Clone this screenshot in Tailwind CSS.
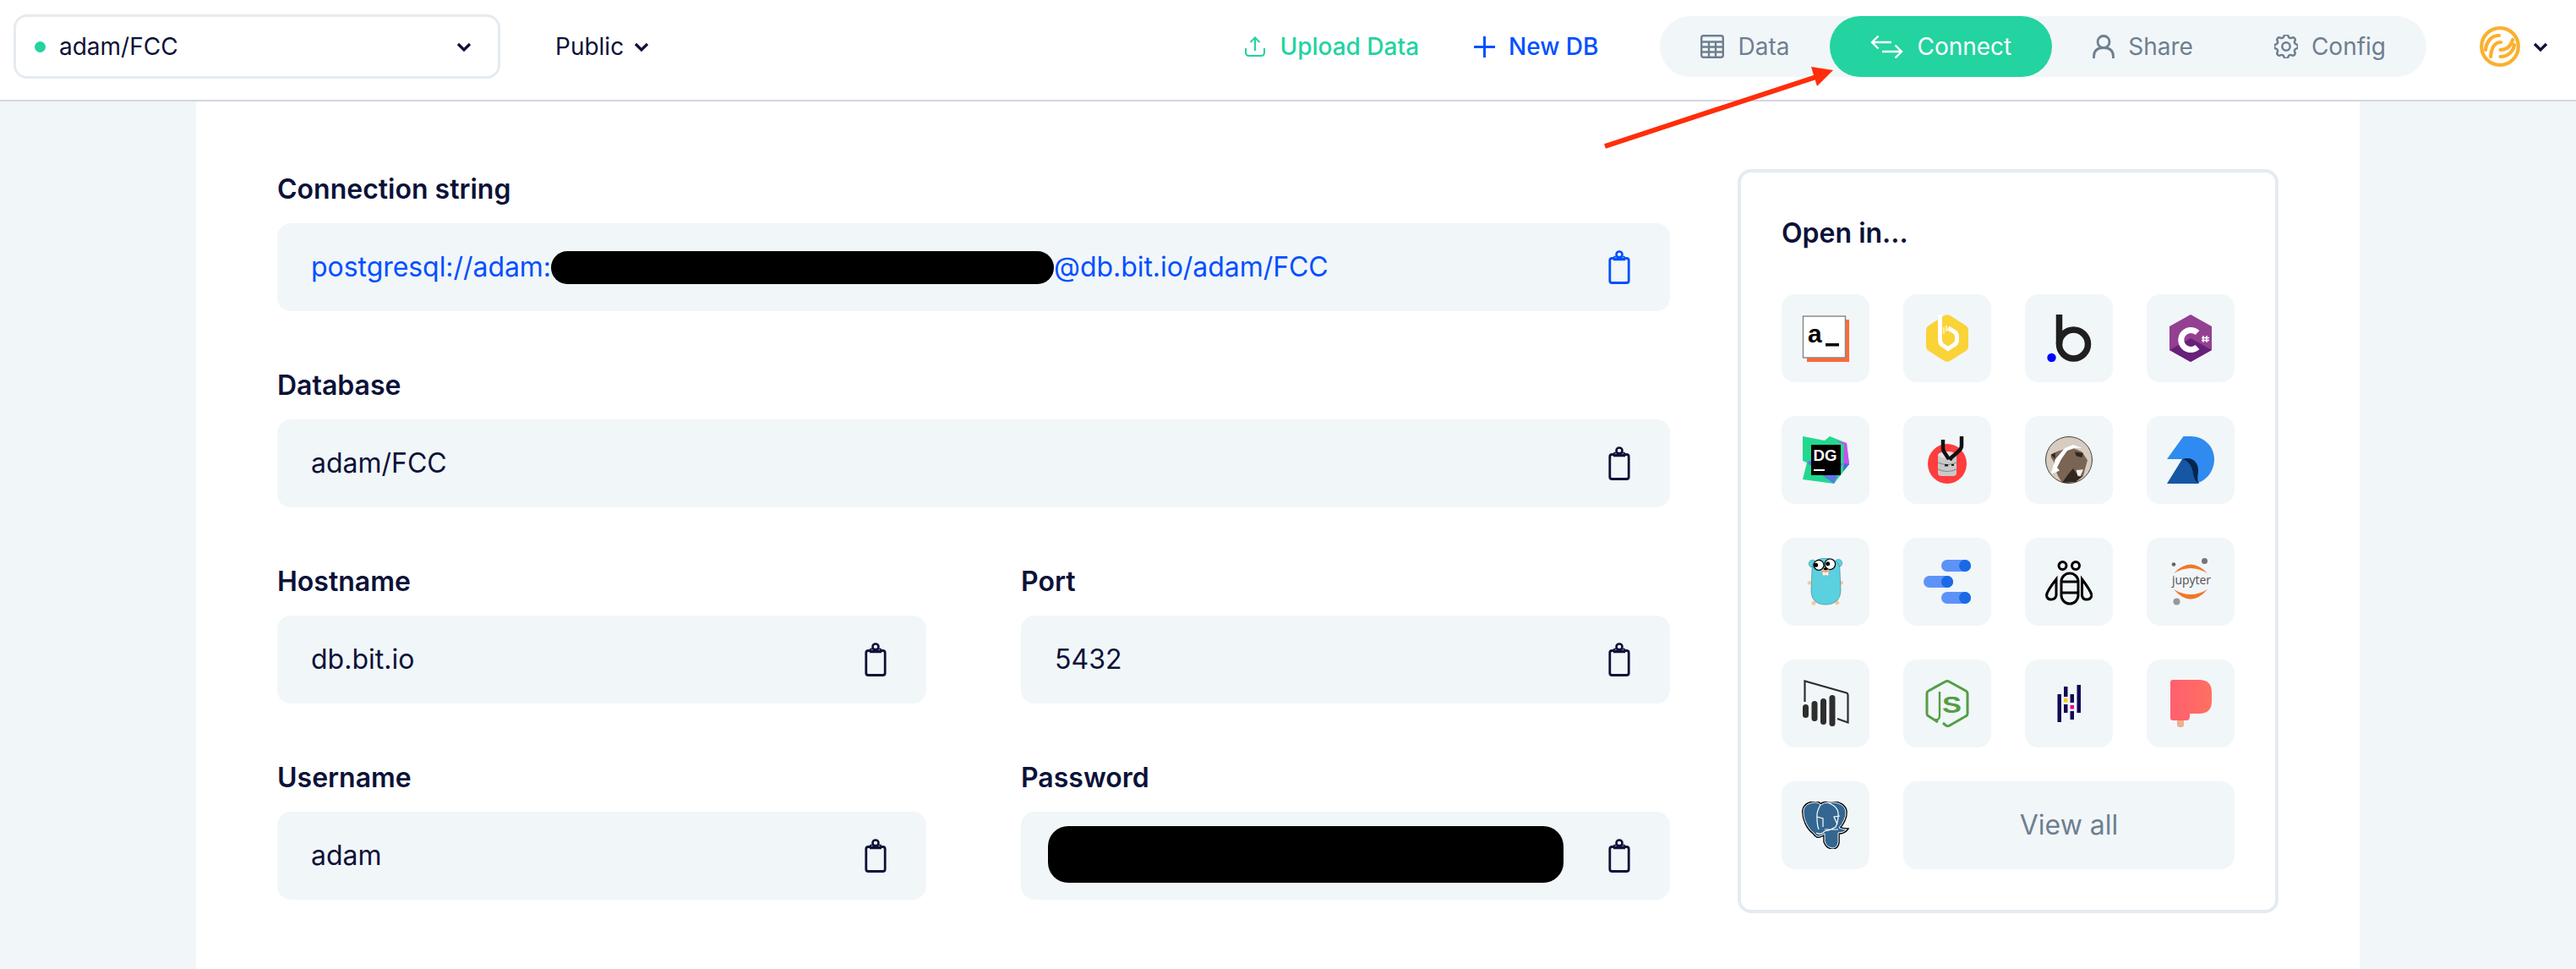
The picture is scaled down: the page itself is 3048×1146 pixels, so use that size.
<!DOCTYPE html>
<html lang="en">
<head>
  <meta charset="UTF-8">
  <title>adam/FCC - Connect</title>
  <script src="https://cdn.jsdelivr.net/npm/@tailwindcss/browser@4"></script>
</head>
<body class="bg-[#f1f6f9] text-[#0c1238] font-[family-name:Inter,sans-serif] text-[32px] w-[3048px] h-[1146px] overflow-hidden relative">
  <!-- shared icons -->
  <svg class="hidden">
    <symbol id="clip" viewBox="0 0 26 40">
      <path d="M7 9.500H4.500Q1.800 9.500 1.800 12V36Q1.800 38.500 4.500 38.500H21.500Q24.200 38.500 24.200 36V12Q24.200 9.500 21.500 9.500H19" fill="none" stroke="currentColor" stroke-width="2.800"/>
      <path d="M6 10.500H20" stroke="currentColor" stroke-width="3.500"/>
      <circle cx="13" cy="5" r="3.500" fill="none" stroke="currentColor" stroke-width="2.600"/>
      <path d="M7 9V7.500H19V9" fill="none" stroke="currentColor" stroke-width="1.500"/>
    </symbol>
    <symbol id="chev" viewBox="0 0 18 11">
      <path d="M2 2L9 9L16 2" fill="none" stroke="currentColor" stroke-width="3.200"/>
    </symbol>
  </svg>

  <!-- Header -->
  <header class="h-[120px] bg-white border-b-2 border-[#d5d5e3] flex items-center pb-2 pl-4 pr-[33px] text-[28px]">
    <div class="w-[576px] h-[76px] border-[3px] border-[#e5ebf0] rounded-2xl flex items-center pl-[22px] pr-[31px]">
      <span class="w-[13px] h-[13px] rounded-full bg-[#23d3a0]"></span>
      <span class="ml-4">adam/FCC</span>
      <svg class="w-[18px] h-[11px] ml-auto"><use href="#chev"/></svg>
    </div>
    <div class="flex items-center ml-[65px] gap-3">
      <span>Public</span>
      <svg class="w-[18px] h-[11px]"><use href="#chev"/></svg>
    </div>

    <div class="flex items-center gap-[17px] ml-auto text-[#23d3a0] font-medium">
      <svg class="w-6 h-6" viewBox="0 0 24 24" fill="none" stroke="currentColor" stroke-width="2"><path d="M1 14V19Q1 23 5 23H19Q23 23 23 19V14M12 17V2M6.500 7L12 1.500L17.500 7"/></svg>
      <span>Upload Data</span>
    </div>
    <div class="flex items-center gap-4 ml-[65px] text-[#0050ff] font-medium">
      <svg class="w-[25px] h-[25px]" viewBox="0 0 25 25" fill="none" stroke="currentColor" stroke-width="3"><path d="M12.500 0V25M0 12.500H25"/></svg>
      <span>New DB</span>
    </div>

    <nav class="flex items-center h-[72px] rounded-full bg-[#f1f6f9] text-[#6e7f8f] ml-[73px]">
      <a class="flex items-center gap-4 px-12 h-full">
        <svg class="w-7 h-7" viewBox="0 0 28 28" fill="none" stroke="currentColor" stroke-width="2.400"><rect x="1.200" y="1.200" width="25.600" height="25.600" rx="2.500"/><path d="M1 8.500H27M1 14.500H27M1 20.500H27M10 8.500V27M18 8.500V27"/></svg>
        <span>Data</span>
      </a>
      <a class="flex items-center gap-4 px-12 h-full rounded-full bg-[#23d3a0] text-white">
        <svg class="w-[39px] h-7" viewBox="0 0 39 28" fill="none" stroke="currentColor" stroke-width="2.400"><path d="M2 9H25M9.500 1.500L2 9L9.500 16.500M37 20H14M29.500 12.500L37 20L29.500 27.500"/></svg>
        <span>Connect</span>
      </a>
      <a class="flex items-center gap-4 px-12 h-full">
        <svg class="w-[26px] h-7" viewBox="0 0 26 28" fill="none" stroke="currentColor" stroke-width="2.800"><circle cx="13" cy="8.500" r="7"/><path d="M1.500 28V26Q1.500 15.500 13 15.500Q24.500 15.500 24.500 26V28"/></svg>
        <span>Share</span>
      </a>
      <a class="flex items-center gap-4 px-12 h-full">
        <svg class="w-7 h-7" viewBox="3 3 18 18" fill="none" stroke="currentColor" stroke-width="1.600"><path d="M10.325 4.317c.426-1.756 2.924-1.756 3.350 0a1.724 1.724 0 002.573 1.066c1.543-.94 3.310.826 2.370 2.370a1.724 1.724 0 001.065 2.572c1.756.426 1.756 2.924 0 3.350a1.724 1.724 0 00-1.066 2.573c.94 1.543-.826 3.310-2.370 2.370a1.724 1.724 0 00-2.572 1.065c-.426 1.756-2.924 1.756-3.350 0a1.724 1.724 0 00-2.573-1.066c-1.543.94-3.310-.826-2.370-2.370a1.724 1.724 0 00-1.065-2.572c-1.756-.426-1.756-2.924 0-3.350a1.724 1.724 0 001.066-2.573c-.94-1.543.826-3.310 2.370-2.370.996.608 2.296.07 2.572-1.065z"/><path d="M15 12a3 3 0 11-6 0 3 3 0 016 0z"/></svg>
        <span>Config</span>
      </a>
    </nav>

    <div class="flex items-center gap-[15px] ml-[63px]">
      <svg class="w-12 h-12" viewBox="0 0 48 48" fill="none" stroke="#fbb02d" stroke-width="4.200" stroke-linecap="round"><circle cx="24" cy="24" r="21.800"/><path d="M23 11C14 11 8 18 7 28M25 19C18 19 14 25 13 36M24.500 28C32 28 37 23 39 16M24.500 36C33 36 40 30 41 22"/></svg>
      <svg class="w-[18px] h-[11px]"><use href="#chev"/></svg>
    </div>
  </header>

  <!-- Main panel -->
  <main class="w-[2560px] h-[1026px] ml-[232px] bg-white px-24 pt-20 flex gap-20">
    <section class="w-[1648px] grid grid-cols-2 gap-x-[112px] gap-y-16 content-start">
      <div class="col-span-2">
        <h3 class="font-semibold leading-[48px] mb-4">Connection string</h3>
        <div class="h-[104px] rounded-2xl bg-[#f1f6f9] flex items-center pl-10 pr-[47px] text-[#0050ff] tracking-[-0.05px]">
          <span>postgresql://adam:</span>
          <span class="w-[595px] h-[39px] rounded-full bg-black"></span>
          <span>@db.bit.io/adam/FCC</span>
          <svg class="w-[26px] h-10 ml-auto"><use href="#clip"/></svg>
        </div>
      </div>
      <div class="col-span-2">
        <h3 class="font-semibold leading-[48px] mb-4">Database</h3>
        <div class="h-[104px] rounded-2xl bg-[#f1f6f9] flex items-center pl-10 pr-[47px]">
          <span>adam/FCC</span>
          <svg class="w-[26px] h-10 ml-auto"><use href="#clip"/></svg>
        </div>
      </div>
      <div>
        <h3 class="font-semibold leading-[48px] mb-4">Hostname</h3>
        <div class="h-[104px] rounded-2xl bg-[#f1f6f9] flex items-center pl-10 pr-[47px]">
          <span>db.bit.io</span>
          <svg class="w-[26px] h-10 ml-auto"><use href="#clip"/></svg>
        </div>
      </div>
      <div>
        <h3 class="font-semibold leading-[48px] mb-4">Port</h3>
        <div class="h-[104px] rounded-2xl bg-[#f1f6f9] flex items-center pl-10 pr-[47px]">
          <span>5432</span>
          <svg class="w-[26px] h-10 ml-auto"><use href="#clip"/></svg>
        </div>
      </div>
      <div>
        <h3 class="font-semibold leading-[48px] mb-4">Username</h3>
        <div class="h-[104px] rounded-2xl bg-[#f1f6f9] flex items-center pl-10 pr-[47px]">
          <span>adam</span>
          <svg class="w-[26px] h-10 ml-auto"><use href="#clip"/></svg>
        </div>
      </div>
      <div>
        <h3 class="font-semibold leading-[48px] mb-4">Password</h3>
        <div class="h-[104px] rounded-2xl bg-[#f1f6f9] flex items-center pl-8 pr-[47px]">
          <span class="w-[610px] h-[67px] mb-[3px] rounded-3xl bg-black"></span>
          <svg class="w-[26px] h-10 ml-auto"><use href="#clip"/></svg>
        </div>
      </div>
    </section>

    <!-- Open in card -->
    <aside class="w-[640px] h-[880px] border-4 border-[#e5ebf0] rounded-2xl p-12">
      <h3 class="font-semibold leading-[48px] mb-12">Open in...</h3>
      <div class="grid grid-cols-4 gap-10">
        <!-- a_ -->
        <div class="h-[104px] rounded-2xl bg-[#f1f6f9] flex items-center justify-center">
          <svg class="w-14 h-14" viewBox="0 0 56 56">
            <rect x="6" y="6" width="50" height="50" fill="#ff6a33"/>
            <rect x="1.500" y="2" width="50" height="49" fill="#fff" stroke="#8a8a8a" stroke-width="1.500"/>
            <text x="7" y="33" font-family="Liberation Sans" font-weight="700" font-size="30" fill="#000">a</text>
            <rect x="28" y="34" width="16" height="3.500" fill="#000"/>
          </svg>
        </div>
        <!-- beekeeper -->
        <div class="h-[104px] rounded-2xl bg-[#f1f6f9] flex items-center justify-center">
          <svg class="w-14 h-14" viewBox="0 0 56 56">
            <path d="M28 0L32 1.500L50 13Q53 15 53 18V38Q53 41 50 43L32 54.500Q28 57 24 54.500L6 43Q3 41 3 38V18Q3 15 6 13L24 1.500Z" fill="#fad337"/>
            <path d="M19.500 0V30Q19.500 34 22 36L29 40.500L36 36Q39.500 34 39.500 30V26Q39.500 22 36 20L29 16" fill="none" stroke="#fff" stroke-width="5"/>
            <path d="M24 15V23M27 13V20" stroke="#fff" stroke-width="1.200"/>
          </svg>
        </div>
        <!-- bubble -->
        <div class="h-[104px] rounded-2xl bg-[#f1f6f9] flex items-center justify-center">
          <svg class="w-14 h-14" viewBox="0 0 56 56">
            <path d="M16.500 0V35" stroke="#1f1f1f" stroke-width="7.500"/>
            <circle cx="33.500" cy="35" r="17" fill="none" stroke="#1f1f1f" stroke-width="7.500"/>
            <circle cx="7.500" cy="51" r="5.200" fill="#0000ff"/>
          </svg>
        </div>
        <!-- c# -->
        <div class="h-[104px] rounded-2xl bg-[#f1f6f9] flex items-center justify-center">
          <svg class="w-14 h-14" viewBox="0 0 56 56">
            <path d="M28 0L53 14V42L28 56L3 42V14Z" fill="#934090"/>
            <path d="M28 28L53 42L28 56L3 42Z" fill="#68217a"/>
            <path d="M36 21.500A11.500 11.500 0 1 0 36 38.500" fill="none" stroke="#fff" stroke-width="7"/>
            <path d="M43 25V33M47 25V33M41 27.500H50M41 30.500H50" stroke="#fff" stroke-width="1.400"/>
          </svg>
        </div>
        <!-- datagrip -->
        <div class="h-[104px] rounded-2xl bg-[#f1f6f9] flex items-center justify-center">
          <svg class="w-14 h-14" viewBox="0 0 56 56">
            <path d="M1 0L27 5L33 0L53 8L56 33L38 56L1 51L6 31L1 29Z" fill="#22d88f"/>
            <path d="M6 31L12 28L48 32L38 56L24 46Z" fill="#5a78e8"/>
            <path d="M40 5L53 8L56 33L49 41L50 10Z" fill="#c94ff0"/>
            <path d="M50 32L56 33L49 41Z" fill="#3b6fd8"/>
            <rect x="11" y="10" width="35" height="36" fill="#000"/>
            <text x="13.500" y="29" font-family="Liberation Sans" font-weight="700" font-size="18" fill="#fff" textLength="28" lengthAdjust="spacingAndGlyphs">DG</text>
            <rect x="14" y="39" width="13" height="2" fill="#fff"/>
          </svg>
        </div>
        <!-- usql -->
        <div class="h-[104px] rounded-2xl bg-[#f1f6f9] flex items-center justify-center">
          <svg class="w-14 h-14" viewBox="0 0 56 56">
            <ellipse cx="28" cy="32.500" rx="23" ry="23.500" fill="#ff3d3d"/>
            <rect x="17" y="21" width="22" height="26" rx="4" fill="#c9c9c9"/>
            <path d="M17 31Q28 36 39 31M17 39Q28 44 39 39" fill="none" stroke="#8d8d8d" stroke-width="1.200"/>
            <ellipse cx="28" cy="22" rx="11" ry="4" fill="#e2e2e2"/>
            <path d="M23 4V14Q23 17 26 21L30 27M45 0V11Q45 15 40 19L33 25L31 28" fill="none" stroke="#111" stroke-width="4.500"/>
            <rect x="25" y="33" width="4" height="2.500" fill="#222"/>
            <rect x="33" y="33" width="3" height="2" fill="#222"/>
          </svg>
        </div>
        <!-- dbeaver -->
        <div class="h-[104px] rounded-2xl bg-[#f1f6f9] flex items-center justify-center">
          <svg class="w-14 h-14" viewBox="0 0 56 56">
            <circle cx="28" cy="28" r="27.500" fill="#d6ccc2" stroke="#4a4038" stroke-width="1"/>
            <path d="M6.700 21.700L13.300 18.300L23.300 15L33.300 14L43.300 18.300L50 28.300L46.700 40L45 46.700L33.300 54L20 55L15 46.700L11.700 38.300L10 30L6.700 25Z" fill="#7a6453"/>
            <path d="M20 55L27 45L33 38L40 48L45 47L36 54Z" fill="#33261f"/>
            <path d="M7 43L12 27L23 14L33 10L44 14L36 13.500L26 17L19 27L14 37L17 40.500L9 44Z" fill="#fff"/>
            <path d="M36.700 40L45 39.300L41.700 46.700L38.300 46.700Z" fill="#f4f1ec"/>
            <path d="M35 18.300L45 20L43.300 25L36.700 23.300Z" fill="#33261f"/>
            <path d="M6.700 21.700L11.700 19.300L11.700 26.700Z" fill="#33261f"/>
          </svg>
        </div>
        <!-- blue D -->
        <div class="h-[104px] rounded-2xl bg-[#f1f6f9] flex items-center justify-center">
          <svg class="w-14 h-14" viewBox="0 0 56 56">
            <path d="M19.500 0H28C44 0 56 12 56 27C56 43 44 56 30 56H24L18 27H0Z" fill="#2f8bef"/>
            <path d="M18 27C26 29 30 36 31 45C32 50 34 54 38 56H0Z" fill="#1557a3"/>
            <path d="M18 27C30 23 38 31 37 42C36 49 36 53 38 56C34 54 32 50 31 45C30 36 26 29 18 27Z" fill="#06264f"/>
          </svg>
        </div>
        <!-- gopher -->
        <div class="h-[104px] rounded-2xl bg-[#f1f6f9] flex items-center justify-center">
          <svg class="w-14 h-14" viewBox="0 0 56 56">
            <circle cx="12.700" cy="6.700" r="4.500" fill="#5bd0df" stroke="#3e7f89" stroke-width=".5"/>
            <circle cx="43.300" cy="6" r="4.500" fill="#5bd0df" stroke="#3e7f89" stroke-width=".5"/>
            <circle cx="9" cy="29.300" r="2.200" fill="#f6c99a"/>
            <circle cx="46.700" cy="29.300" r="2.200" fill="#f6c99a"/>
            <circle cx="14" cy="53.300" r="2.500" fill="#f6c99a"/>
            <circle cx="41.700" cy="52.700" r="2.500" fill="#f6c99a"/>
            <path d="M28 0C39 0 45 6 45 14L46 38C46 50 38 55 28 55C18 55 11 50 11 38L12 14C12 6 18 0 28 0Z" fill="#5bd0df" stroke="#3e7f89" stroke-width=".6"/>
            <circle cx="20" cy="8.300" r="6" fill="#fff" stroke="#000" stroke-width="1.200"/>
            <circle cx="33.300" cy="7.300" r="6.300" fill="#fff" stroke="#000" stroke-width="1.200"/>
            <circle cx="16.700" cy="8.300" r="2.500" fill="#000"/>
            <circle cx="30.700" cy="6.700" r="2.500" fill="#000"/>
            <path d="M24.300 16H31.700V20.700H24.300Z" fill="#fff" stroke="#999" stroke-width=".5"/>
            <path d="M28 16V20.700" stroke="#999" stroke-width=".5"/>
            <ellipse cx="28" cy="15" rx="5" ry="2" fill="#f0b080"/>
            <ellipse cx="28.300" cy="12.700" rx="2.500" ry="1.500" fill="#000"/>
          </svg>
        </div>
        <!-- data studio -->
        <div class="h-[104px] rounded-2xl bg-[#f1f6f9] flex items-center justify-center">
          <svg class="w-14 h-14" viewBox="0 0 56 56">
            <rect x="21" y="2" width="35" height="14" rx="7" fill="#5c93f7"/>
            <circle cx="49" cy="9" r="7" fill="#1a6ae6"/>
            <rect x="0" y="21" width="35" height="14" rx="7" fill="#5c93f7"/>
            <circle cx="28" cy="28" r="7" fill="#1a6ae6"/>
            <rect x="21" y="40" width="35" height="14" rx="7" fill="#5c93f7"/>
            <circle cx="49" cy="47" r="7" fill="#1a6ae6"/>
          </svg>
        </div>
        <!-- bee -->
        <div class="h-[104px] rounded-2xl bg-[#f1f6f9] flex items-center justify-center">
          <svg class="w-14 h-14" viewBox="0 0 56 56" fill="none" stroke="#000" stroke-width="3">
            <circle cx="20.500" cy="9" r="4.500"/>
            <circle cx="36" cy="9" r="4.500"/>
            <rect x="19" y="18" width="20" height="36" rx="10"/>
            <path d="M19 28H39M19 41H39"/>
            <path d="M13 25Q2 39 1.500 44Q2 49 7 49Q12 49 13 44Z"/>
            <path d="M43.500 25Q54 39 55 44Q54 49 49 49Q44 49 43.500 44Z"/>
          </svg>
        </div>
        <!-- jupyter -->
        <div class="h-[104px] rounded-2xl bg-[#f1f6f9] flex items-center justify-center">
          <svg class="w-14 h-14" viewBox="0 0 56 56">
            <path d="M8 18Q28 -3 48 18Q28 6 8 18Z" fill="#f37726"/>
            <path d="M8 37Q28 60 48 37Q28 49 8 37Z" fill="#f37726"/>
            <circle cx="44.500" cy="3.500" r="3.500" fill="#767677"/>
            <circle cx="8" cy="7.500" r="2.300" fill="#616262"/>
            <circle cx="11.500" cy="51.500" r="4" fill="#989798"/>
            <text x="6" y="31" font-family="Open Sans" font-size="14" fill="#4e4e4e" textLength="46" lengthAdjust="spacingAndGlyphs">jupyter</text>
          </svg>
        </div>
        <!-- power bi -->
        <div class="h-[104px] rounded-2xl bg-[#f1f6f9] flex items-center justify-center">
          <svg class="w-14 h-14" viewBox="0 0 56 56">
            <path d="M3.500 26V1.500L53 15.500Q54.500 16 54.500 18V50.500L42 46" fill="none" stroke="#2e2e2e" stroke-width="2.200"/>
            <rect x="1" y="29" width="7" height="16" rx="3.500" fill="#2e2e2e"/>
            <rect x="11.500" y="25" width="7" height="24" rx="3.500" fill="#2e2e2e"/>
            <rect x="22" y="22" width="7" height="31" rx="3.500" fill="#2e2e2e"/>
            <rect x="32.500" y="18" width="7" height="37" rx="3.500" fill="#2e2e2e"/>
          </svg>
        </div>
        <!-- node -->
        <div class="h-[104px] rounded-2xl bg-[#f1f6f9] flex items-center justify-center">
          <svg class="w-14 h-14" viewBox="0 0 56 56">
            <path d="M17 50L6 43Q4 42 4 40V16Q4 14 6 13L26 2Q28 1 30 2L50 13Q52 14 52 16V40Q52 42 50 43L30 54.500Q28 55.500 26 53.500L23 51" fill="none" stroke="#539e43" stroke-width="3"/>
            <text x="22" y="39" font-family="Liberation Sans" font-weight="700" font-size="28" fill="#539e43" textLength="23" lengthAdjust="spacingAndGlyphs">S</text>
            <path d="M19 14V42Q19 48 14 47" fill="none" stroke="#539e43" stroke-width="2.400"/>
          </svg>
        </div>
        <!-- pandas -->
        <div class="h-[104px] rounded-2xl bg-[#f1f6f9] flex items-center justify-center">
          <svg class="w-14 h-14" viewBox="0 0 56 56" fill="#130654">
            <rect x="14.500" y="17" width="4.500" height="33"/>
            <rect x="22" y="8" width="4.500" height="12"/>
            <rect x="22" y="29" width="4.500" height="10"/>
            <rect x="29.500" y="17" width="4.500" height="10"/>
            <rect x="29.500" y="37" width="4.500" height="10"/>
            <rect x="37.500" y="6" width="4.500" height="33"/>
            <rect x="22" y="22" width="4.500" height="4.500" fill="#ffca00"/>
            <rect x="29.500" y="30" width="4.500" height="4.500" fill="#e70488"/>
          </svg>
        </div>
        <!-- popsql -->
        <div class="h-[104px] rounded-2xl bg-[#f1f6f9] flex items-center justify-center">
          <svg class="w-14 h-14" viewBox="0 0 56 56">
            <defs><linearGradient id="pop" x1="0" x2="1"><stop offset="0" stop-color="#ff5f70"/><stop offset="1" stop-color="#ff7060"/></linearGradient></defs>
            <rect x="12" y="44" width="8" height="12" rx="3" fill="#f0b08a"/>
            <path d="M4 3Q4 0 7 0H38Q53 0 53 15V25Q53 40 38 40H27V44Q27 48 23 48H7Q4 48 4 45Z" fill="url(#pop)"/>
          </svg>
        </div>
        <!-- postgres -->
        <div class="h-[104px] rounded-2xl bg-[#f1f6f9] flex items-center justify-center">
          <svg class="w-14 h-14" viewBox="0 0 56 56">
            <path d="M2 10C3 4 9 1 17 1Q20 1 22 4Q26 1 32 1C44 0 52 5 52 13Q52 22 44 31Q48 33 53 33Q50 37 43 37V48Q42 55 36 55Q29 54 27 47V38Q21 42 18 41Q16 40 14 37C7 32 1 20 2 10Z" fill="#000" stroke="#000" stroke-width="3.600"/>
            <path d="M2 10C3 4 9 1 17 1Q20 1 22 4Q26 1 32 1C44 0 52 5 52 13Q52 22 44 31Q48 33 53 33Q50 37 43 37V48Q42 55 36 55Q29 54 27 47V38Q21 42 18 41Q16 40 14 37C7 32 1 20 2 10Z" fill="#336791" stroke="#fff" stroke-width="1"/>
            <path d="M22 4Q17 12 18 20Q18 28 20 33M30 1Q44 6 43 16Q43 24 40 30Q34 34 27 35Q23 40 17 37M18 18L25 20V30M45 17L38 18L42 27M27 33H43" fill="none" stroke="#fff" stroke-width="1.200"/>
          </svg>
        </div>
        <div class="col-span-3 h-[104px] rounded-2xl bg-[#f1f6f9] flex items-center justify-center text-[#6e7f8f]">View all</div>
      </div>
    </aside>
  </main>

  <!-- annotation arrow over the header -->
  <svg class="absolute top-0 left-0 w-[3048px] h-[200px] pointer-events-none" viewBox="0 0 3048 200">
    <path d="M1899 173L2155 89" stroke="#ff2d0a" stroke-width="6"/>
    <path d="M2169 83L2143 79L2150 102Z" fill="#ff2d0a"/>
  </svg>
</body>
</html>
